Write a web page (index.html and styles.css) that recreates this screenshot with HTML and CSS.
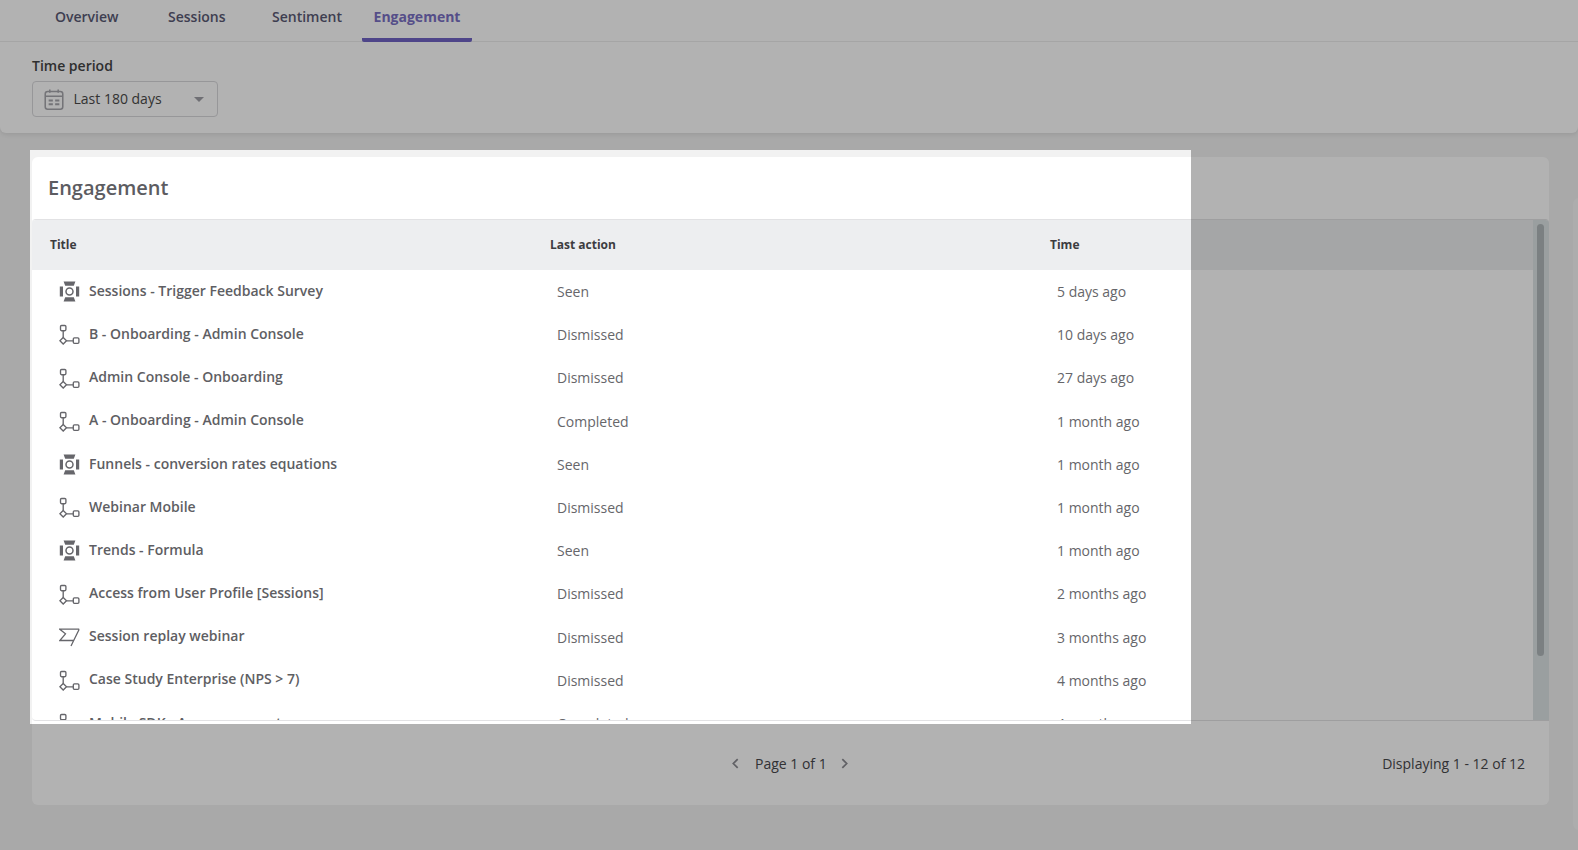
FILE: index.html
```html
<!DOCTYPE html>
<html lang="en">
<head>
<meta charset="utf-8">
<title>Engagement</title>
<link rel="stylesheet" href="styles.css">
</head>
<body>
<svg class="defs" width="0" height="0" aria-hidden="true">
  <symbol id="i-spot" viewBox="0 0 21 21">
    <path fill="currentColor" d="M4.6 0.6h11.8l-1.6 4.2H6.2zM4.6 20.4h11.8l-1.6-4.2H6.2zM0.8 5.6h3.2v9.8H0.8zM17 5.6h3.2v9.8H17z"/>
    <circle cx="10.5" cy="10.5" r="3.5" fill="none" stroke="currentColor" stroke-width="1.5"/>
  </symbol>
  <symbol id="i-flow" viewBox="0 0 21 21">
    <g fill="none" stroke="currentColor" stroke-width="1.35">
      <rect x="1.5" y="1.5" width="5.4" height="5.2" rx="1.1"/>
      <path d="M4.2 6.7v6.8M7.5 16.8h6.7"/>
      <path d="M4.2 13.5l3.3 3.3-3.3 3.3-3.3-3.3z"/>
      <rect x="14.3" y="13.9" width="5.6" height="5.4" rx="1.1"/>
    </g>
  </symbol>
  <symbol id="i-flag" viewBox="0 0 21 21">
    <path fill="none" stroke="currentColor" stroke-width="1.3" d="M20.2 2.2H0.8l5.7 4.6-5.7 6.7h14.1M20.2 2.2L12 19"/>
  </symbol>
</svg>

<nav class="tabs">
  <a class="tab tab-overview">Overview</a>
  <a class="tab tab-sessions">Sessions</a>
  <a class="tab tab-sentiment">Sentiment</a>
  <a class="tab tab-engagement is-active">Engagement</a>
</nav>

<section class="filters">
  <label class="field-label">Time period</label>
  <div class="select">
    <svg class="cal" viewBox="0 0 20 22" width="20" height="21" aria-hidden="true">
      <g fill="none" stroke="currentColor" stroke-width="1.6">
        <rect x="0.8" y="2.6" width="18.4" height="18.6" rx="2.6"/>
        <path d="M0.8 7.6h18.4M5.6 0.4v3.6M14.4 0.4v3.6"/>
      </g>
      <path fill="currentColor" d="M4.4 11h4.4v2H4.4zM11.2 11h4.4v2h-4.4zM4.4 15h4.4v2H4.4zM11.2 15h4.4v2h-4.4z"/>
    </svg>
    <span class="select-value">Last 180 days</span>
    <span class="caret"></span>
  </div>
</section>

<main class="content">
  <section class="card">
    <h2 class="card-title">Engagement</h2>
    <div class="table">
      <div class="table-body">
        <div class="row head">
          <div>Title</div><div>Last action</div><div>Time</div>
        </div>
        <div class="row"><div class="name"><svg class="ico"><use href="#i-spot"/></svg><span>Sessions - Trigger Feedback Survey</span></div><div class="cell">Seen</div><div class="cell">5 days ago</div></div>
        <div class="row"><div class="name"><svg class="ico"><use href="#i-flow"/></svg><span>B - Onboarding - Admin Console</span></div><div class="cell">Dismissed</div><div class="cell">10 days ago</div></div>
        <div class="row"><div class="name"><svg class="ico"><use href="#i-flow"/></svg><span>Admin Console - Onboarding</span></div><div class="cell">Dismissed</div><div class="cell">27 days ago</div></div>
        <div class="row"><div class="name"><svg class="ico"><use href="#i-flow"/></svg><span>A - Onboarding - Admin Console</span></div><div class="cell">Completed</div><div class="cell">1 month ago</div></div>
        <div class="row"><div class="name"><svg class="ico"><use href="#i-spot"/></svg><span>Funnels - conversion rates equations</span></div><div class="cell">Seen</div><div class="cell">1 month ago</div></div>
        <div class="row"><div class="name"><svg class="ico"><use href="#i-flow"/></svg><span>Webinar Mobile</span></div><div class="cell">Dismissed</div><div class="cell">1 month ago</div></div>
        <div class="row"><div class="name"><svg class="ico"><use href="#i-spot"/></svg><span>Trends - Formula</span></div><div class="cell">Seen</div><div class="cell">1 month ago</div></div>
        <div class="row"><div class="name"><svg class="ico"><use href="#i-flow"/></svg><span>Access from User Profile [Sessions]</span></div><div class="cell">Dismissed</div><div class="cell">2 months ago</div></div>
        <div class="row"><div class="name"><svg class="ico"><use href="#i-flag"/></svg><span>Session replay webinar</span></div><div class="cell">Dismissed</div><div class="cell">3 months ago</div></div>
        <div class="row"><div class="name"><svg class="ico"><use href="#i-flow"/></svg><span>Case Study Enterprise (NPS &gt; 7)</span></div><div class="cell">Dismissed</div><div class="cell">4 months ago</div></div>
        <div class="row"><div class="name"><svg class="ico"><use href="#i-flow"/></svg><span>Mobile SDK - Announcement</span></div><div class="cell">Completed</div><div class="cell">4 months ago</div></div>
      </div>
      <div class="scrollbar"><div class="thumb"></div></div>
    </div>
    <footer class="pager">
      <div class="pager-center">
        <svg class="chev" viewBox="0 0 8 12" width="7" height="11" aria-hidden="true"><path d="M6.5 1L1.5 6l5 5"/></svg>
        <span class="pager-page">Page 1 of 1</span>
        <svg class="chev" viewBox="0 0 8 12" width="7" height="11" aria-hidden="true"><path d="M1.5 1l5 5-5 5"/></svg>
      </div>
      <div class="pager-count">Displaying 1 - 12 of 12</div>
    </footer>
  </section>
</main>

<div class="edge-panel"></div>
<div class="spotlight"></div>
</body>
</html>
```

FILE: styles.css
```css
* { box-sizing: border-box; }

html, body {
  margin: 0;
  height: 100%;
  overflow: hidden;
}

body {
  background: #f2f2f2;
  font-family: "Open Sans", "Liberation Sans", sans-serif;
  font-size: 14px;
  color: #4a4a4f;
}

.defs { position: absolute; }

.tabs {
  position: relative;
  height: 42px;
  background: #fff;
  border-bottom: 1px solid #ececec;
}

.tab {
  position: absolute;
  top: 6px;
  line-height: 22px;
  font-weight: 600;
  color: #5a5a74;
}

.tab-overview { left: 55px; }
.tab-sessions { left: 168px; }
.tab-sentiment { left: 272px; }
.tab-engagement { left: 362px; width: 110px; height: 36px; text-align: center; }

.is-active {
  font-weight: 700;
  color: #7a70c4;
  border-bottom: 4px solid #7064c4;
  border-radius: 0 0 2px 2px;
}

.filters {
  height: 91px;
  padding: 13px 32px 0;
  background: #fff;
  border-radius: 0 0 6px 6px;
  box-shadow: 0 2px 4px rgba(0, 0, 0, 0.08);
}

.field-label {
  display: block;
  line-height: 22px;
  font-weight: 600;
  color: #444;
}

.select {
  display: flex;
  align-items: center;
  width: 186px;
  height: 36px;
  margin-top: 4px;
  padding: 0 13px 0 11px;
  border: 1px solid #d8d8dc;
  border-radius: 4px;
  color: #4a4a4a;
}

.cal { color: #a6a6ac; flex: none; }

.select-value {
  margin: -2px 0 0 9.5px;
  flex: 1;
  white-space: nowrap;
}

.caret {
  width: 0;
  height: 0;
  border-left: 5px solid transparent;
  border-right: 5px solid transparent;
  border-top: 5px solid #a0a0a6;
}

.content { padding: 24px 29px 0 32px; }

.card {
  height: 648px;
  background: #fff;
  border-radius: 6px;
}

.card-title {
  margin: 0;
  height: 62px;
  padding: 16px 16px 0;
  font-size: 20px;
  line-height: 30px;
  font-weight: 600;
  color: #5c5c61;
}

.table {
  display: flex;
  height: 502px;
  border-top: 1px solid #e2e2e4;
  border-bottom: 1px solid #e2e2e4;
  border-radius: 4px 4px 0 4px;
  overflow: hidden;
}

.table-body {
  flex: 1;
  min-width: 0;
  overflow: hidden;
}

.scrollbar {
  flex: none;
  width: 16px;
  padding: 4px 5px 0 4px;
  background: #dde4e5;
}

.thumb {
  height: 432px;
  background: #b1b8bb;
  border-radius: 4px;
}

.row {
  display: grid;
  grid-template-columns: 500px 500px 1fr;
  align-items: center;
  height: 43.2px;
  padding-left: 18px;
}

.row.head {
  height: 50px;
  padding-bottom: 1px;
  background: #edeef0;
  font-size: 12px;
  font-weight: 700;
  color: #3c3c40;
}

.name {
  display: flex;
  align-items: center;
  padding-left: 9px;
  margin-top: -2.6px;
  font-weight: 600;
  color: #5e5e63;
}

.ico {
  width: 21px;
  height: 21px;
  margin-right: 9px;
  margin-left: -0.5px;
  color: #66666b;
  flex: none;
  margin-top: 3px;
}

.name span { margin-left: 0.5px; }

.cell {
  padding-left: 7px;
  color: #66666a;
}

.pager {
  position: relative;
  height: 84px;
  display: flex;
  align-items: center;
  justify-content: flex-end;
  padding: 0 24px 0 0;
  color: #48484c;
}

.pager-center {
  position: absolute;
  left: 700px;
  top: 0;
  height: 84px;
  display: flex;
  align-items: center;
}

.pager-page { margin: 0 14px 0 16px; }

.chev {
  fill: none;
  stroke: #8c8c92;
  stroke-width: 2;
}

.edge-panel {
  position: absolute;
  left: 1573px;
  top: 198px;
  width: 20px;
  height: 632px;
  background: #f8f8f8;
  border-radius: 6px;
}

.spotlight {
  position: absolute;
  left: 30px;
  top: 150px;
  width: 1161px;
  height: 574px;
  box-shadow: 0 0 0 2000px rgba(0, 0, 0, 0.3);
  pointer-events: none;
}
```
